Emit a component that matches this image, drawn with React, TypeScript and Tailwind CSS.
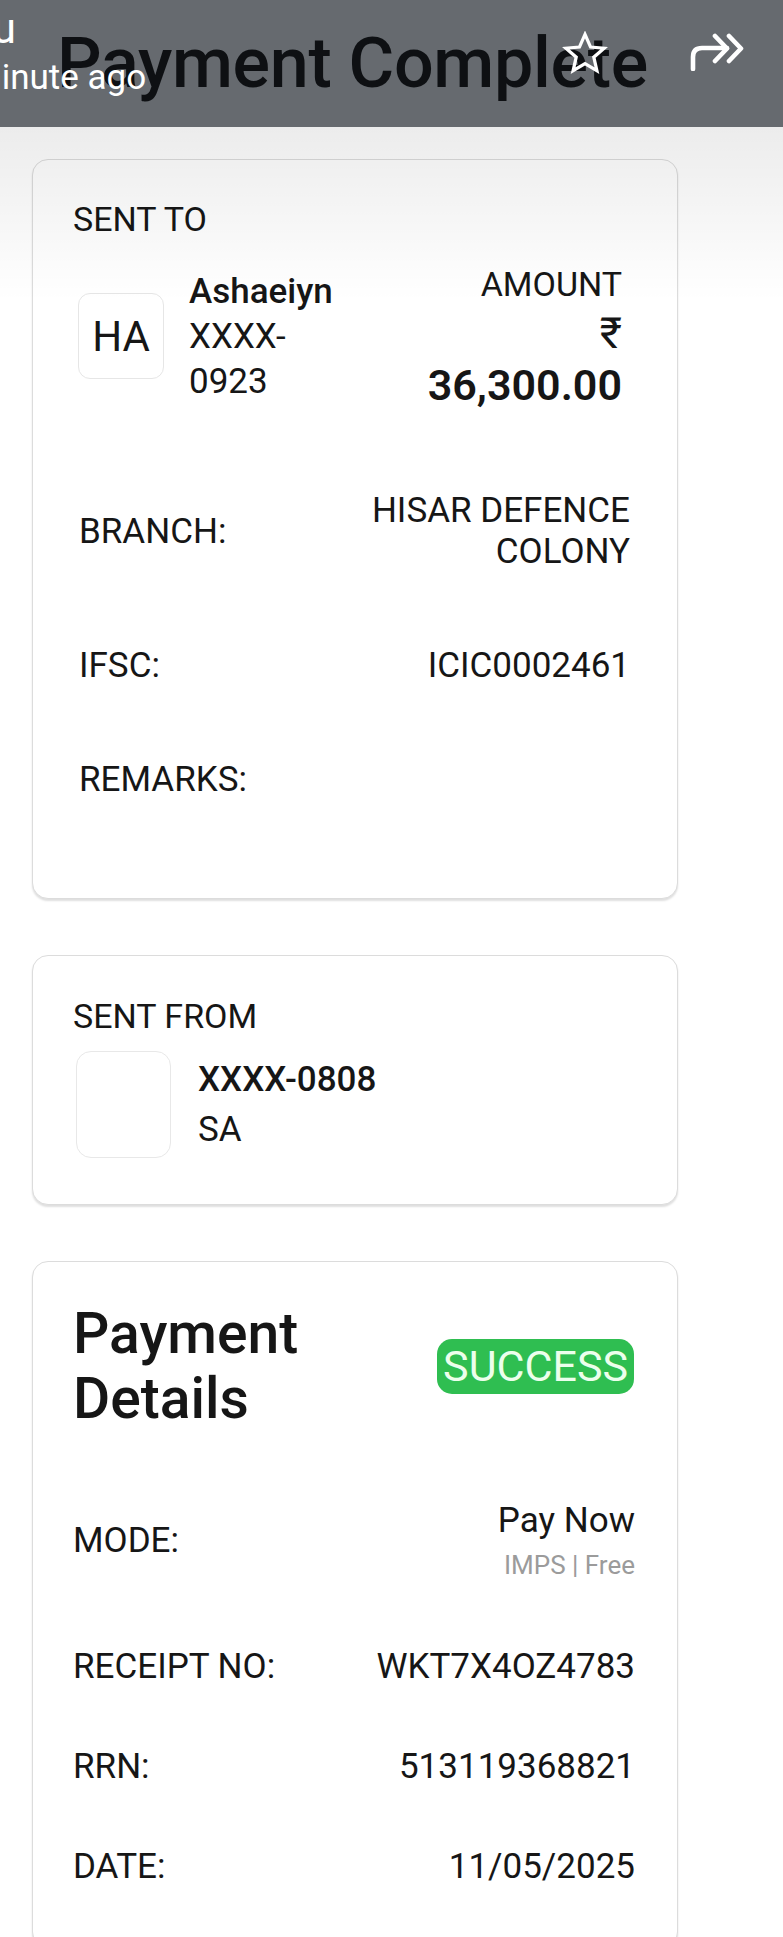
import React from 'react';

type Row = { label: string; value?: string; sub?: string };

const recipientRows: Row[] = [
  { label: 'BRANCH:', value: 'HISAR DEFENCE COLONY' },
  { label: 'IFSC:', value: 'ICIC0002461' },
  { label: 'REMARKS:', value: '' },
];

const paymentRows: Row[] = [
  { label: 'RECEIPT NO:', value: 'WKT7X4OZ4783' },
  { label: 'RRN:', value: '513119368821' },
  { label: 'DATE:', value: '11/05/2025' },
];

const StarIcon = () => (
  <svg width="46" height="44" viewBox="0 0 24 23" fill="none" stroke="white" strokeWidth="1.7" strokeLinejoin="miter">
    <path d="M12 1.8l2.9 6.6 7.1.6-5.4 4.7 1.6 7-6.2-3.7-6.2 3.7 1.6-7L2 9l7.1-.6z" />
  </svg>
);

const ForwardAllIcon = () => (
  <svg width="54" height="38" viewBox="0 0 54 38" fill="none" stroke="white" strokeWidth="4.6" strokeLinecap="round" strokeLinejoin="round">
    <path d="M3 36V24q0-9 9-9h25" />
    <path d="M25 3l12 12.5L25 28" />
    <path d="M39 3l12 12.5L39 28" />
  </svg>
);

const Card: React.FC<{ children: React.ReactNode; className?: string }> = ({ children, className = '' }) => (
  <section
    className={`rounded-[16px] border border-[#dcdcdc] bg-white px-[40px] shadow-[0_2px_2px_rgba(0,0,0,0.13)] ${className}`}
  >
    {children}
  </section>
);

const App: React.FC = () => {
  return (
    <div className="relative w-[783px] min-h-[1937px] overflow-hidden bg-white font-['Roboto','Liberation_Sans',sans-serif] text-[#161616]">
      {/* top bar, dimmed under the notification shade */}
      <header className="relative h-[127px] overflow-hidden bg-[#666a6f] pl-[57px] pt-[28px]">
        <h1 className="text-[70px] font-medium leading-none tracking-[-0.3px] text-[#0e1013]">Payment Complete</h1>

        {/* notification overlay */}
        <div className="absolute left-[-55px] top-[8px] text-[42px] leading-none text-white">You</div>
        <div className="absolute left-[-29px] top-[60px] text-[35px] leading-none text-white">minute ago</div>
        <div className="absolute left-[562px] top-[31px]">
          <StarIcon />
        </div>
        <div className="absolute left-[690px] top-[33px]">
          <ForwardAllIcon />
        </div>
      </header>

      <main className="flex w-[678px] flex-col gap-[56px] pl-[32px] pt-[32px] pb-[60px]">
        {/* Sent to */}
        <Card className="pt-[39px] pb-[98px]">
          <h2 className="text-[34px] leading-[40px]">SENT TO</h2>

          <div className="mt-[22px] ml-[5px] mr-[15px] flex items-center justify-between">
            <div className="flex items-center gap-[25px]">
              <div className="flex h-[86px] w-[86px] items-center justify-center rounded-[12px] border border-[#e6e6e6] text-[42px]">
                HA
              </div>
              <div className="w-[150px] text-[35px] leading-[45px]">
                <div className="font-medium">Ashaeiyn</div>
                <div>XXXX-0923</div>
              </div>
            </div>
            <div className="text-right">
              <div className="text-[34px] leading-[46px]">AMOUNT</div>
              <div className="text-[43px] leading-[52px]">₹</div>
              <div className="text-[43px] font-semibold leading-[52px]">36,300.00</div>
            </div>
          </div>

          <div className="mt-[79px] ml-[6px] mr-[7px] flex flex-col gap-[73px]">
            {recipientRows.map(row => (
              <div key={row.label} className="flex items-center justify-between text-[35px] leading-[41px]">
                <span>{row.label}</span>
                <span className="w-[280px] text-right">{row.value}</span>
              </div>
            ))}
          </div>
        </Card>

        {/* Sent from */}
        <Card className="pt-[40px] pb-[46px]">
          <h2 className="text-[34px] leading-[40px]">SENT FROM</h2>
          <div className="mt-[15px] ml-[3px] flex items-center gap-[27px]">
            <div className="h-[107px] w-[95px] rounded-[15px] border border-[#e8e8e8]" />
            <div className="text-[35px] leading-[50px]">
              <div className="font-medium">XXXX-0808</div>
              <div>SA</div>
            </div>
          </div>
        </Card>

        {/* Payment details */}
        <Card className="pt-[39px] pb-[60px]">
          <div className="mr-[3px] flex items-center justify-between">
            <h2 className="w-[240px] text-[57px] font-medium leading-[65px]">Payment Details</h2>
            <span className="rounded-[15px] bg-[#2fbe51] px-[6px] text-[43px] leading-[55px] text-[#ecffec]">
              SUCCESS
            </span>
          </div>

          <div className="mt-[69px] mr-[2px] flex items-center justify-between">
            <span className="text-[35px] leading-[41px]">MODE:</span>
            <div className="text-right">
              <div className="text-[35px] leading-[41px]">Pay Now</div>
              <div className="mt-[8px] text-[26px] leading-[32px] text-[#9b9b9b]">IMPS | Free</div>
            </div>
          </div>

          <div className="mt-[65px] mr-[2px] flex flex-col gap-[59px]">
            {paymentRows.map(row => (
              <div key={row.label} className="flex items-center justify-between text-[35px] leading-[41px]">
                <span>{row.label}</span>
                <span className="text-right">{row.value}</span>
              </div>
            ))}
          </div>
        </Card>
      </main>

      {/* soft shade falling from the top bar */}
      <div className="pointer-events-none absolute left-0 top-[127px] h-[175px] w-full bg-linear-to-b from-black/[0.075] to-transparent" />
    </div>
  );
};

export default App;
